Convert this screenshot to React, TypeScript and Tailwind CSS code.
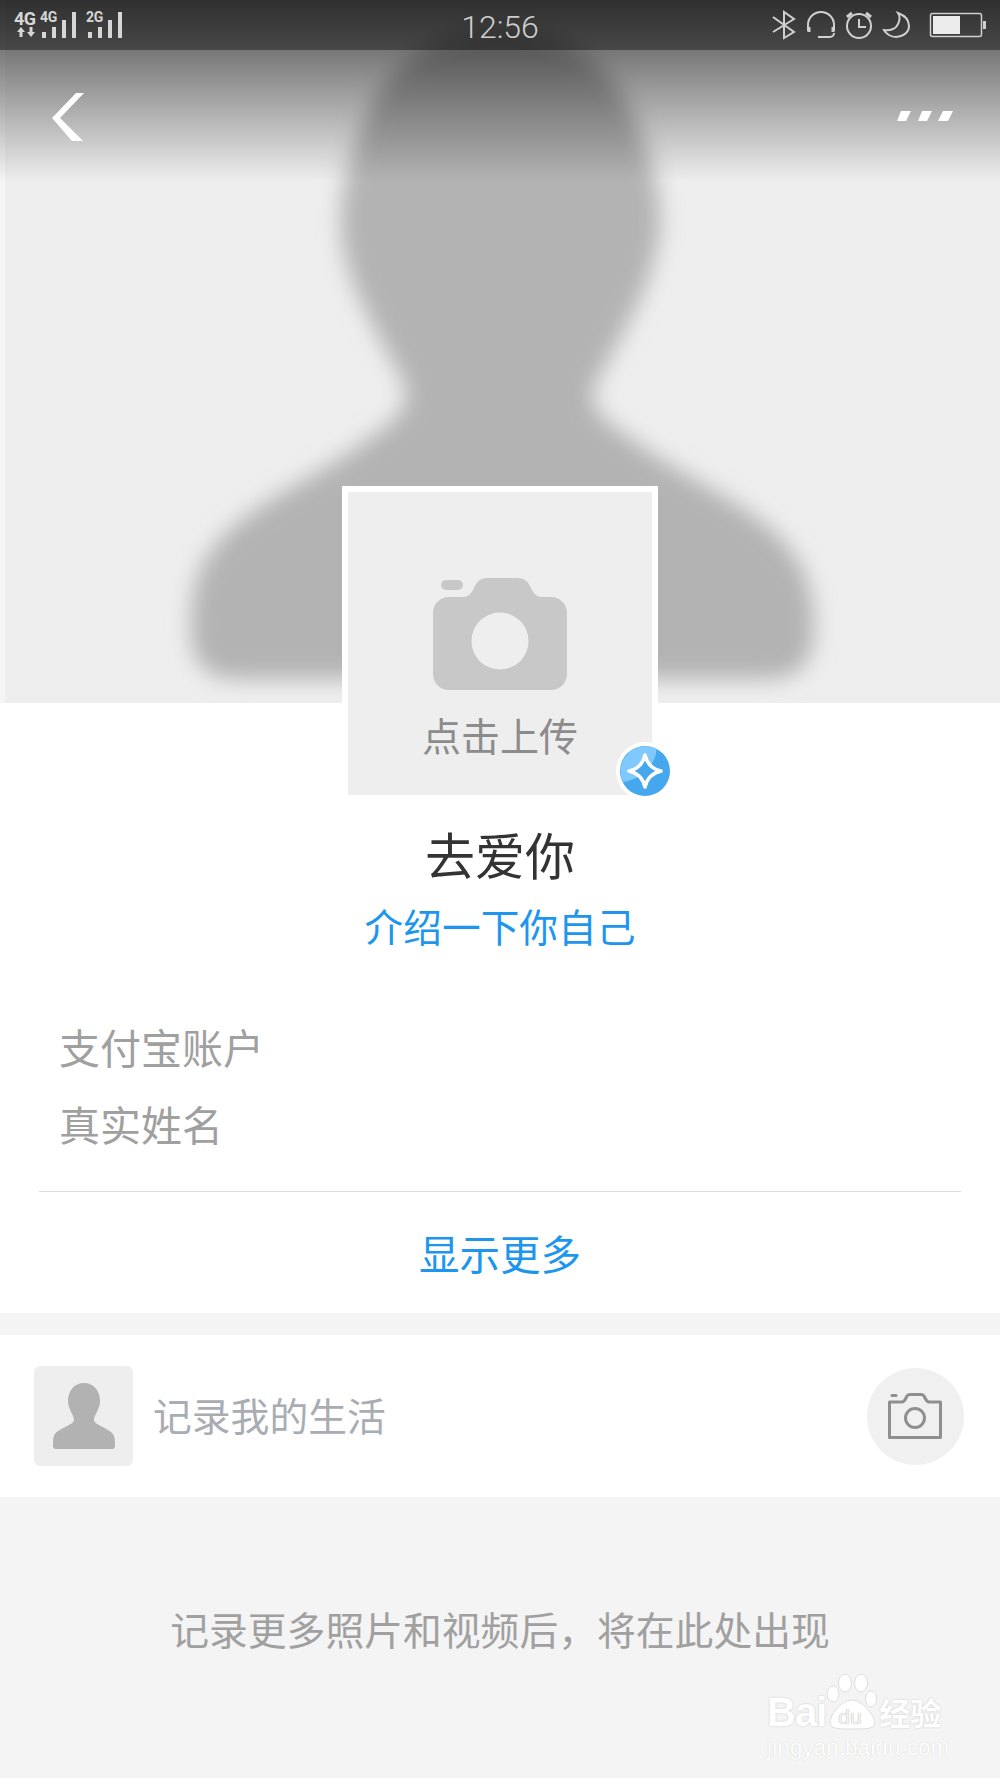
import React from 'react'

const cjk = "font-['Noto_Sans_CJK_SC','Noto_Sans',sans-serif]"

function Signal({ label }: { label: string }) {
    return (
        <div className="relative h-[38px] w-[36px]">
            <svg width="36" height="38" viewBox="0 0 36 38" fill="#d6d6d6">
                <rect x="0" y="32" width="4" height="6" />
                <rect x="10" y="27" width="4" height="11" />
                <rect x="20" y="20" width="4" height="18" />
                <rect x="30" y="12" width="4" height="26" />
            </svg>
            <span className="absolute -left-[2px] top-[10px] text-[14px] font-bold leading-[14px] tracking-[-0.3px]">{label}</span>
        </div>
    )
}

function StatusBar() {
    return (
        <div className="absolute inset-x-0 top-0 grid h-[50px] grid-cols-3 bg-gradient-to-b from-black/80 to-black/70 font-['Roboto',sans-serif] text-[#d6d6d6]">
            <div className="flex items-start gap-[10px] pl-[14px]">
                <div className="w-[18px] pt-[11px]">
                    <p className="text-[18px] font-bold leading-[16px] tracking-[-0.5px]">4G</p>
                    <svg width="24" height="10" viewBox="0 0 24 10" fill="#d6d6d6">
                        <path d="M7 0l4 5H8.500v5h-3V5H3zM17 10l-4-5h2.500V0h3v5H21z" />
                    </svg>
                </div>
                <Signal label="4G" />
                <Signal label="2G" />
            </div>
            <p className="pt-[8px] text-center text-[32px] font-light leading-[38px] text-[#cdcdcd]">12:56</p>
            <div className="flex justify-end">
                <svg width="235" height="50" viewBox="765 0 235 50" fill="none" stroke="#d0d0d0" strokeWidth="2">
                    {/* bluetooth */}
                    <path d="M773 17l21 15-10 6V12l10 7-21 13" />
                    {/* headset */}
                    <path d="M808 31V25a13 13 0 0 1 26 0v6" />
                    <path d="M818 37h12a4 4 0 0 0 4-4" />
                    <path d="M809 27v5M833 27v5" strokeWidth="3" />
                    {/* alarm */}
                    <circle cx="859" cy="26" r="12" />
                    <path d="M859 19v8h7" />
                    <path d="M847 17l5-4M871 17l-5-4" strokeWidth="3" />
                    {/* moon */}
                    <path d="M898 13C906 16 909 21 909 26C909 33 902 37 896 37C891 37 886 34 884 30C890 31 896 29 898 24C900 20 900 16 898 13Z" />
                    {/* battery */}
                    <rect x="930.500" y="13.500" width="51" height="23" rx="2" strokeWidth="1.500" />
                    <rect x="933" y="16" width="27" height="18" fill="#ececec" stroke="none" />
                    <rect x="983" y="21" width="3" height="8" fill="#d0d0d0" stroke="none" />
                </svg>
            </div>
        </div>
    )
}

function Hero() {
    return (
        <div className="relative h-[703px] overflow-hidden bg-[#eeeeee]">
            <svg className="absolute inset-0" width="1000" height="703" viewBox="0 0 1000 703">
                <defs>
                    <filter id="soft" x="-10%" y="-10%" width="120%" height="120%">
                        <feGaussianBlur stdDeviation="11" />
                    </filter>
                </defs>
                <path
                    filter="url(#soft)"
                    fill="#b3b3b3"
                    d="M500 30C430 30 385 70 365 120C345 165 335 215 345 255C355 300 385 345 405 385C412 410 390 425 360 445C320 475 250 505 220 540C197 565 191 590 191 630C191 662 207 679 237 679L768 679C798 679 814 662 814 630C814 590 805 565 782 540C750 505 680 475 640 445C610 425 585 410 595 385C615 345 645 300 655 255C668 215 655 165 635 120C615 70 570 30 500 30Z"
                />
            </svg>
            <div className="absolute inset-y-0 left-0 w-[5px] bg-white/40" />
            <div className="absolute inset-x-0 top-[50px] h-[132px] bg-gradient-to-b from-black/50 to-transparent" />
            <StatusBar />
            <div className="absolute inset-x-0 top-[93px] flex items-start justify-between pl-[52px] pr-[47px]">
                <svg width="32" height="48" viewBox="52 93 32 48" fill="#ffffff">
                    <polygon points="76,93 84,93 60,118 83,141 72,141 52,118" />
                </svg>
                <svg className="mt-[18px]" width="56" height="10" viewBox="897 111 56 10" fill="#ffffff">
                    <polygon points="901,111 911,111 906,121 897,121" />
                    <polygon points="922,111 932,111 927,121 918,121" />
                    <polygon points="943,111 953,111 948,121 938,121" />
                </svg>
            </div>
        </div>
    )
}

function BigCamera() {
    return (
        <svg width="134" height="112" viewBox="433 578 134 112">
            <rect x="441" y="580" width="22" height="10" rx="5" fill="#c8c8c8" />
            <path
                fill="#c8c8c8"
                d="M449 597H463C468 597 471 594 474 588C477 581 481 578 488 578H517C524 578 528 581 531 588C534 594 537 597 542 597H551C560 597 567 604 567 613V674C567 683 560 690 551 690H449C440 690 433 683 433 674V613C433 604 440 597 449 597Z"
            />
            <circle cx="500" cy="641" r="28.500" fill="#eeeeee" />
        </svg>
    )
}

function VerifiedBadge() {
    return (
        <div className="absolute -right-[22px] -bottom-[5px] flex h-[58px] w-[58px] items-center justify-center rounded-full bg-white">
            <svg width="50" height="50" viewBox="0 0 50 50">
                <circle cx="25" cy="25" r="25" fill="#45a8ef" />
                <path d="M3 36A25 25 0 0 1 36 2.500C38 14 24 33 3 36Z" fill="#80c9fd" />
                <path d="M25 9C27 18 32 23 41 25C32 27 27 32 25 41C23 32 18 27 9 25C18 23 23 18 25 9Z" fill="#45a8ef" stroke="#ffffff" strokeWidth="3.500" strokeLinejoin="round" />
            </svg>
        </div>
    )
}

function AvatarCard() {
    return (
        <div className="relative mx-auto -mt-[217px] h-[309px] w-[316px] border-[6px] border-b-0 border-white bg-[#eeeeee]">
            <div className="flex flex-col items-center pt-[86px]">
                <BigCamera />
                <p className="mt-[21px] text-[39px] leading-[46px] text-[#8c8c8c]">点击上传</p>
            </div>
            <VerifiedBadge />
        </div>
    )
}

function Watermark() {
    return (
        <div className="absolute left-[767px] top-[1672px] w-[190px] font-['Liberation_Sans',sans-serif] text-white">
            <div className="flex h-[60px] items-end">
                <span className="text-[40px] font-bold leading-[40px] tracking-[-1px] [text-shadow:0_0_2px_#c4c4c4]">Bai</span>
                <div className="relative ml-[1px] h-[60px] w-[50px]">
                    <svg width="50" height="60" viewBox="829 1670 50 60">
                        <g fill="#ffffff" stroke="#dddddd" strokeWidth="1">
                            <ellipse cx="835" cy="1692" rx="6" ry="8" />
                            <ellipse cx="847" cy="1681" rx="6.500" ry="9" />
                            <ellipse cx="863" cy="1681" rx="6.500" ry="9" />
                            <ellipse cx="873" cy="1697" rx="5.500" ry="8" />
                            <path d="M854 1698C866 1698 877 1716 877 1720C877 1727 870 1727 855 1727C840 1727 832 1727 832 1720C832 1714 842 1698 854 1698Z" />
                        </g>
                    </svg>
                    <span className="absolute bottom-[3px] left-[11px] text-[21px] leading-[24px] text-[#f4f4f4] [text-shadow:0_0_1px_#999]">du</span>
                </div>
                <span className={`${cjk} ml-[2px] text-[31px] font-bold leading-[40px] [text-shadow:0_0_2px_#c4c4c4]`}>经验</span>
            </div>
            <p className="mt-[2px] text-[22px] leading-[28px] tracking-[0.3px] [text-shadow:0_0_1px_#c4c4c4]">jingyan.baidu.com</p>
        </div>
    )
}

export default function App() {
    return (
        <div className={`${cjk} relative h-[1778px] w-[1000px] overflow-hidden bg-[#f4f4f4]`}>
            <Hero />
            <section className="bg-white pb-[30px]">
                <AvatarCard />
                <h1 className="mt-[28px] text-center text-[50px] font-normal leading-[60px] text-[#333333]">去爱你</h1>
                <p className="mt-[17px] text-center text-[38.700px] leading-[50px] text-[#1e96ee]">介绍一下你自己</p>
                <div className="px-[59px]">
                    <p className="mt-[66px] text-[41px] leading-[60px] text-[#a0a0a0]">支付宝账户</p>
                    <p className="mt-[17px] text-[41px] leading-[60px] text-[#a0a0a0]">真实姓名</p>
                </div>
                <div className="mx-[39px] mt-[38px] h-px bg-[#dcdcdc]" />
                <p className="mt-[31px] text-center text-[40.500px] leading-[60px] text-[#1e96ee]">显示更多</p>
            </section>

            <section className="mt-[22px] flex h-[162px] items-center bg-white pl-[34px] pr-[36px]">
                <div className="flex h-[100px] w-[99px] items-center justify-center rounded-md bg-[#eeeeee]">
                    <svg width="64" height="66" viewBox="0 0 64 66">
                        <path
                            fill="#b2b2b2"
                            d="M32 0C42 0 48 8 48 18C48 26 42 32 42 37C42 42 60 46 62 53C63 55 63 60 63 63C63 65 62 66 60 66H4C2 66 1 65 1 63C1 60 1 55 2 53C4 46 22 42 22 37C22 32 16 26 16 18C16 8 22 0 32 0Z"
                        />
                    </svg>
                </div>
                <p className="mb-[4px] ml-[20px] flex-1 text-[38.800px] leading-[50px] text-[#a9adb3]">记录我的生活</p>
                <div className="flex h-[97px] w-[97px] items-center justify-center rounded-full bg-[#f0f0f0]">
                    <svg className="mr-[2px]" width="54" height="46" viewBox="0 0 54 46" fill="none" stroke="#8f8f8f" strokeWidth="3">
                        <path d="M1.500 9H14C16 9 17 7 18 5C19 2 20 1.500 22 1.500H33C35 1.500 36 2 37 5C38 7 39 9 41 9H52.500V44.500H1.500Z" strokeLinejoin="round" />
                        <circle cx="27" cy="25" r="9.500" />
                        <path d="M4 2.500H8" strokeWidth="3" strokeLinecap="round" />
                    </svg>
                </div>
            </section>

            <p className="mt-[106px] text-center text-[38.800px] leading-[50px] text-[#a0a0a0]">记录更多照片和视频后，将在此处出现</p>
            <Watermark />
        </div>
    )
}
